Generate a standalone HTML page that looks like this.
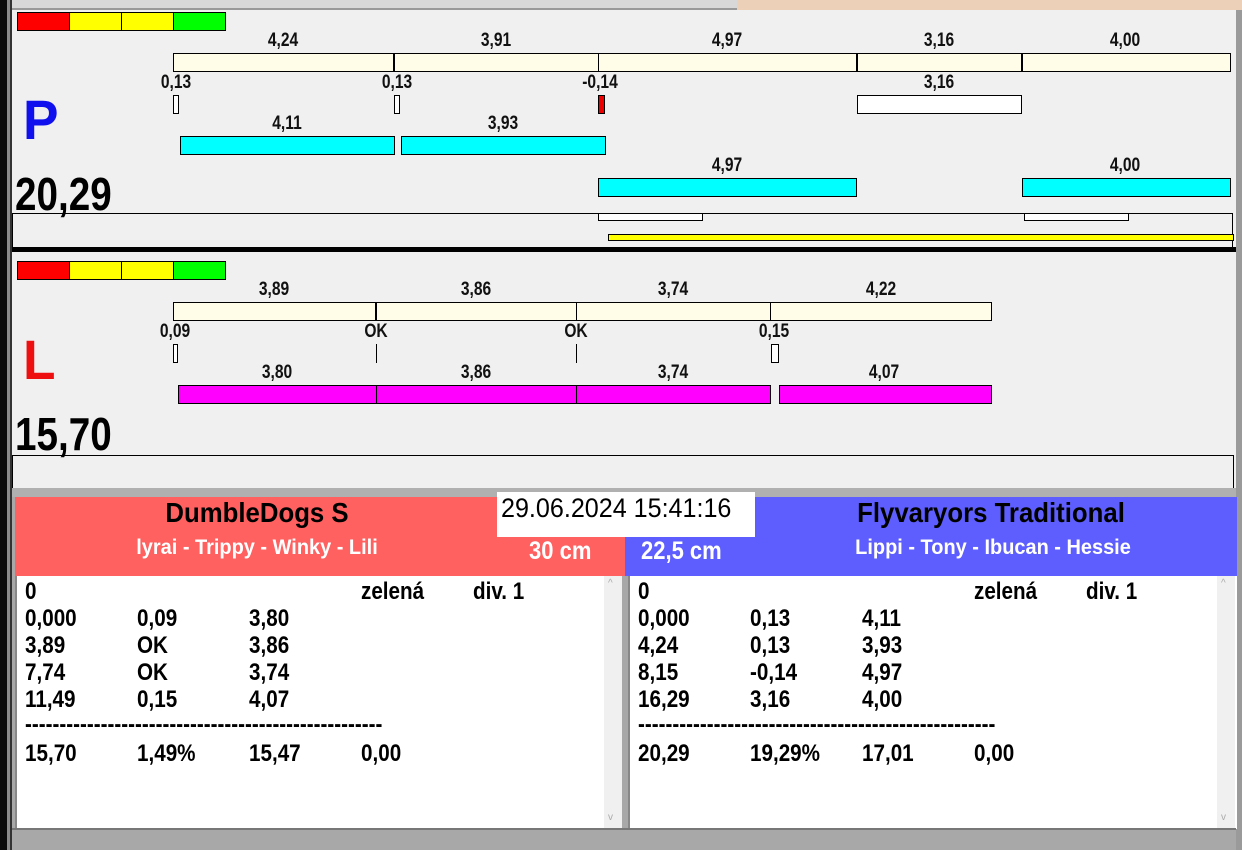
<!DOCTYPE html>
<html><head><meta charset="utf-8"><style>
*{margin:0;padding:0;box-sizing:border-box}
body{width:1242px;height:850px;position:relative;overflow:hidden;background:#a8a8a8;font-family:"Liberation Sans",Arial,sans-serif}
div,span{position:absolute}
.b{border:1px solid #000}
.cr{background:#fffde8}
.cy{background:#00ffff}
.mg{background:#ff00ff}
.w{background:#fff}
.lb{font-weight:bold;font-size:19px;color:#111;transform:translateX(-50%) scaleX(.82);white-space:nowrap;line-height:19px;top:0}
.vl{width:1px;background:#000}
.t{font-weight:bold;font-size:24px;line-height:24px;color:#000;white-space:nowrap;transform:scaleX(.86);transform-origin:left}
.big{font-size:46px;font-weight:bold;color:#000;transform:scaleX(.84);transform-origin:left;line-height:46px}
</style></head><body>
<div style="left:0;top:0;width:7px;height:850px;background:#0a0a0a"></div>
<div style="left:7px;top:0;width:3px;height:850px;background:#8a8a8a"></div>
<div style="left:10px;top:0;width:2px;height:850px;background:#333"></div>
<div style="left:12px;top:0;width:725px;height:10px;background:#d8d8d8;border-bottom:2px solid #999"></div>
<div style="left:737px;top:0;width:505px;height:12px;background:#ecd0b8"></div>
<div style="left:12px;top:10px;width:1224px;height:478px;background:#f0f0f0"></div>
<div style="left:1236px;top:10px;width:6px;height:840px;background:#9a9a9a"></div>

<!-- P panel -->
<div class="b" style="left:17px;top:12px;width:53px;height:19px;background:#f00"></div>
<div class="b" style="left:69px;top:12px;width:53px;height:19px;background:#ff0"></div>
<div class="b" style="left:121px;top:12px;width:53px;height:19px;background:#ff0"></div>
<div class="b" style="left:173px;top:12px;width:53px;height:19px;background:#0f0"></div>

<div class="b cr" style="left:173px;top:53px;width:1058px;height:19px"></div>
<div class="vl" style="left:393px;top:53px;width:2px;height:19px"></div>
<div class="vl" style="left:598px;top:53px;height:19px"></div>
<div class="vl" style="left:856px;top:53px;width:2px;height:19px"></div>
<div class="vl" style="left:1021px;top:53px;width:2px;height:19px"></div>
<span class="lb" style="left:283px;top:31px">4,24</span>
<span class="lb" style="left:496px;top:31px">3,91</span>
<span class="lb" style="left:727px;top:31px">4,97</span>
<span class="lb" style="left:939px;top:31px">3,16</span>
<span class="lb" style="left:1125px;top:31px">4,00</span>

<span class="lb" style="left:176px;top:73px">0,13</span>
<span class="lb" style="left:397px;top:73px">0,13</span>
<span class="lb" style="left:600px;top:73px">-0,14</span>
<span class="lb" style="left:939px;top:73px">3,16</span>
<div class="b w" style="left:173px;top:95px;width:6px;height:19px"></div>
<div class="b w" style="left:394px;top:95px;width:6px;height:19px"></div>
<div class="b" style="left:598px;top:95px;width:7px;height:19px;background:#e00"></div>
<div class="b w" style="left:857px;top:95px;width:165px;height:19px"></div>

<span style="left:23px;top:92px;font-size:56px;line-height:56px;font-weight:bold;color:#1010ee;transform:scaleX(.95);transform-origin:left">P</span>
<span class="lb" style="left:287px;top:114px">4,11</span>
<span class="lb" style="left:503px;top:114px">3,93</span>
<div class="b cy" style="left:180px;top:136px;width:215px;height:19px"></div>
<div class="b cy" style="left:401px;top:136px;width:205px;height:19px"></div>
<span class="lb" style="left:727px;top:156px">4,97</span>
<span class="lb" style="left:1125px;top:156px">4,00</span>
<div class="b cy" style="left:598px;top:178px;width:259px;height:19px"></div>
<div class="b cy" style="left:1022px;top:178px;width:209px;height:19px"></div>
<span class="big" style="left:15px;top:171px">20,29</span>
<div style="left:12px;top:213px;width:1221px;height:35px;border-top:1px solid #000;border-left:1px solid #000;border-right:1px solid #000"></div>
<div class="b w" style="left:598px;top:213px;width:105px;height:8px"></div>
<div class="b w" style="left:1024px;top:213px;width:105px;height:8px"></div>
<div class="b" style="left:608px;top:234px;width:626px;height:7px;background:#ff0"></div>
<div style="left:12px;top:247px;width:1224px;height:5px;background:#000"></div>

<!-- L panel -->
<div class="b" style="left:17px;top:261px;width:53px;height:19px;background:#f00"></div>
<div class="b" style="left:69px;top:261px;width:53px;height:19px;background:#ff0"></div>
<div class="b" style="left:121px;top:261px;width:53px;height:19px;background:#ff0"></div>
<div class="b" style="left:173px;top:261px;width:53px;height:19px;background:#0f0"></div>

<div class="b cr" style="left:173px;top:302px;width:819px;height:19px"></div>
<div class="vl" style="left:375px;top:302px;width:2px;height:19px"></div>
<div class="vl" style="left:576px;top:302px;height:19px"></div>
<div class="vl" style="left:770px;top:302px;height:19px"></div>
<span class="lb" style="left:274px;top:280px">3,89</span>
<span class="lb" style="left:476px;top:280px">3,86</span>
<span class="lb" style="left:673px;top:280px">3,74</span>
<span class="lb" style="left:881px;top:280px">4,22</span>
<span class="lb" style="left:175px;top:322px">0,09</span>
<span class="lb" style="left:376px;top:322px">OK</span>
<span class="lb" style="left:576px;top:322px">OK</span>
<span class="lb" style="left:774px;top:322px">0,15</span>
<div class="b w" style="left:173px;top:344px;width:5px;height:19px"></div>
<div class="vl" style="left:376px;top:344px;height:19px"></div>
<div class="vl" style="left:576px;top:344px;height:19px"></div>
<div class="b w" style="left:771px;top:344px;width:8px;height:19px"></div>
<span style="left:23px;top:332px;font-size:56px;line-height:56px;font-weight:bold;color:#ee1010;transform:scaleX(.95);transform-origin:left">L</span>
<span class="lb" style="left:277px;top:363px">3,80</span>
<span class="lb" style="left:476px;top:363px">3,86</span>
<span class="lb" style="left:673px;top:363px">3,74</span>
<span class="lb" style="left:884px;top:363px">4,07</span>
<div class="b mg" style="left:178px;top:385px;width:593px;height:19px"></div>
<div class="vl" style="left:376px;top:385px;height:19px"></div>
<div class="vl" style="left:576px;top:385px;height:19px"></div>
<div class="b mg" style="left:779px;top:385px;width:213px;height:19px"></div>
<span class="big" style="left:15px;top:411px">15,70</span>
<div style="left:12px;top:455px;width:1222px;height:34px;border-top:1px solid #000;border-left:1px solid #000;border-right:1px solid #000"></div>

<!-- bottom -->
<div style="left:12px;top:488px;width:1224px;height:9px;background:#b0b0b0"></div>
<div style="left:15px;top:497px;width:611px;height:79px;background:#ff6060"></div>
<div style="left:625px;top:497px;width:612px;height:79px;background:#5e5eff"></div>
<div style="left:497px;top:492px;width:258px;height:45px;background:#fff"></div>
<span style="left:501px;top:493px;font-size:27px;color:#000;white-space:nowrap;transform:scaleX(.93);transform-origin:left">29.06.2024 15:41:16</span>
<span style="left:257px;top:497px;transform:translateX(-50%) scaleX(.92);font-size:28px;font-weight:bold;color:#000;white-space:nowrap">DumbleDogs S</span>
<span style="left:257px;top:536px;transform:translateX(-50%) scaleX(.95);font-size:21px;font-weight:bold;color:#fff;white-space:nowrap">lyrai - Trippy - Winky - Lili</span>
<span style="left:529px;top:537px;font-size:25px;font-weight:bold;color:#fff;transform:scaleX(.88);transform-origin:left;white-space:nowrap">30 cm</span>
<span style="left:991px;top:497px;transform:translateX(-50%) scaleX(.92);font-size:28px;font-weight:bold;color:#000;white-space:nowrap">Flyvaryors Traditional</span>
<span style="left:993px;top:536px;transform:translateX(-50%) scaleX(.95);font-size:21px;font-weight:bold;color:#fff;white-space:nowrap">Lippi - Tony - Ibucan - Hessie</span>
<span style="left:641px;top:537px;font-size:25px;font-weight:bold;color:#fff;transform:scaleX(.88);transform-origin:left;white-space:nowrap">22,5 cm</span>

<div style="left:15px;top:576px;width:607px;height:253px;background:#fff;border-left:2px solid #888"></div>
<div style="left:604px;top:576px;width:18px;height:253px;background:#f0f0f0"></div>
<span style="left:608px;top:578px;font-size:10px;color:#aaa">^</span>
<span style="left:608px;top:812px;font-size:10px;color:#aaa">v</span>
<div style="left:622px;top:576px;width:6px;height:253px;background:#a8a8a8"></div>
<div style="left:628px;top:576px;width:609px;height:253px;background:#fff;border-left:2px solid #888"></div>
<div style="left:1217px;top:576px;width:18px;height:253px;background:#f0f0f0"></div>
<span style="left:1221px;top:578px;font-size:10px;color:#aaa">^</span>
<span style="left:1221px;top:812px;font-size:10px;color:#aaa">v</span>
<div style="left:12px;top:828px;width:1224px;height:22px;background:#a8a8a8;border-top:2px solid #777"></div>

<!-- left text -->
<span class="t" style="left:25px;top:580px">0</span><span class="t" style="left:361px;top:580px">zelená</span><span class="t" style="left:473px;top:580px">div. 1</span>
<span class="t" style="left:25px;top:607px">0,000</span><span class="t" style="left:137px;top:607px">0,09</span><span class="t" style="left:249px;top:607px">3,80</span>
<span class="t" style="left:25px;top:634px">3,89</span><span class="t" style="left:137px;top:634px">OK</span><span class="t" style="left:249px;top:634px">3,86</span>
<span class="t" style="left:25px;top:661px">7,74</span><span class="t" style="left:137px;top:661px">OK</span><span class="t" style="left:249px;top:661px">3,74</span>
<span class="t" style="left:25px;top:688px">11,49</span><span class="t" style="left:137px;top:688px">0,15</span><span class="t" style="left:249px;top:688px">4,07</span>
<span class="t" style="left:25px;top:713px">----------------------------------------------------</span>
<span class="t" style="left:25px;top:742px">15,70</span><span class="t" style="left:137px;top:742px">1,49%</span><span class="t" style="left:249px;top:742px">15,47</span><span class="t" style="left:361px;top:742px">0,00</span>
<!-- right text -->
<span class="t" style="left:638px;top:580px">0</span><span class="t" style="left:974px;top:580px">zelená</span><span class="t" style="left:1086px;top:580px">div. 1</span>
<span class="t" style="left:638px;top:607px">0,000</span><span class="t" style="left:750px;top:607px">0,13</span><span class="t" style="left:862px;top:607px">4,11</span>
<span class="t" style="left:638px;top:634px">4,24</span><span class="t" style="left:750px;top:634px">0,13</span><span class="t" style="left:862px;top:634px">3,93</span>
<span class="t" style="left:638px;top:661px">8,15</span><span class="t" style="left:750px;top:661px">-0,14</span><span class="t" style="left:862px;top:661px">4,97</span>
<span class="t" style="left:638px;top:688px">16,29</span><span class="t" style="left:750px;top:688px">3,16</span><span class="t" style="left:862px;top:688px">4,00</span>
<span class="t" style="left:638px;top:713px">----------------------------------------------------</span>
<span class="t" style="left:638px;top:742px">20,29</span><span class="t" style="left:750px;top:742px">19,29%</span><span class="t" style="left:862px;top:742px">17,01</span><span class="t" style="left:974px;top:742px">0,00</span>
</body></html>
